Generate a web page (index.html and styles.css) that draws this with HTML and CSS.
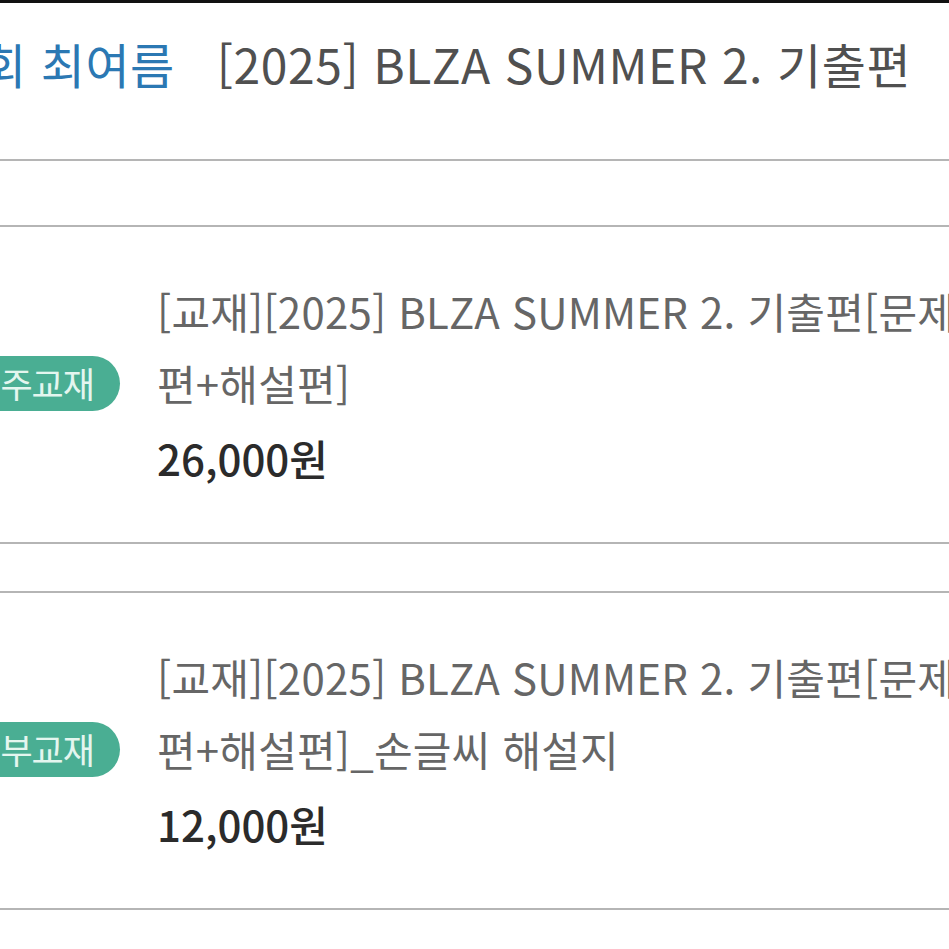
FILE: index.html
```html
<!DOCTYPE html>
<html lang="ko">
<head>
  <meta charset="UTF-8">
  <title>교재 정보</title>
  <link rel="stylesheet" href="styles.css">
</head>
<body>
  <div class="top-strip"></div>

  <div class="lecture-head">
    <span class="teacher">회 최여름</span>
    <span class="lecture-title">[2025] BLZA SUMMER 2. 기출편</span>
  </div>

  <div class="spacer"></div>

  <div class="book-item">
    <div class="book-badge">주교재</div>
    <div class="book-info">
      <div class="book-name">[교재][2025] BLZA SUMMER 2. 기출편[문제편+해설편]</div>
      <div class="book-price">26,000원</div>
    </div>
  </div>

  <div class="spacer gap"></div>

  <div class="book-item">
    <div class="book-badge">부교재</div>
    <div class="book-info">
      <div class="book-name">[교재][2025] BLZA SUMMER 2. 기출편[문제편+해설편]_손글씨 해설지</div>
      <div class="book-price">12,000원</div>
    </div>
  </div>
</body>
</html>
```

FILE: styles.css
```css
body {
  margin: 0;
  background: #fff;
  font-family: "Noto Sans CJK KR", "Noto Sans", sans-serif;
  overflow: hidden;
  width: 949px;
}
.top-strip {
  height: 3px;
  background: #111;
}
.lecture-head {
  display: flex;
  align-items: center;
  gap: 42px;
  height: 158px;
  margin-left: -18px;
  white-space: nowrap;
  font-size: 48px;
  letter-spacing: 0.55px;
  border-bottom: 2px solid #b5b5b5;
  padding-bottom: 36px;
  box-sizing: border-box;
}
.teacher {
  color: #2b78b3;
}
.lecture-title {
  color: #505050;
}
.spacer {
  height: 64px;
  border-bottom: 2px solid #b5b5b5;
}
.spacer.gap {
  height: 47px;
}
.book-item {
  display: flex;
  align-items: center;
  gap: 37px;
  padding: 48px 0 45px;
  margin-left: -40px;
  border-bottom: 2px solid #b5b5b5;
  width: 1300px;
}
.book-badge {
  width: 160px;
  height: 55px;
  margin-top: -6px;
  border-radius: 28px;
  background: #4aae93;
  color: #e4f6ef;
  font-size: 35px;
  letter-spacing: -1px;
  line-height: 54px;
  text-align: right;
  padding-right: 26px;
  box-sizing: border-box;
  flex-shrink: 0;
}
.book-info {
  width: 820px;
}
.book-name {
  color: #666;
  font-size: 42px;
  letter-spacing: 0.2px;
  line-height: 72px;
  word-break: break-all;
}
.book-price {
  color: #2b2b2b;
  font-size: 42px;
  font-weight: 500;
  line-height: 78px;
}
```
